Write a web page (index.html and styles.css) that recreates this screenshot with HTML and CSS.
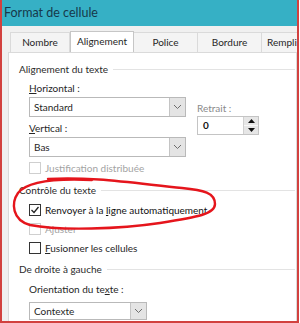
FILE: index.html
```html
<!DOCTYPE html>
<html>
<head>
  <title>Format de cellule</title>
  <link rel="stylesheet" href="styles.css">
</head>
<body>
  <div class="window">
    <div class="titlebar">Format de cellule</div>

    <div class="dialog">
      <div class="tabs">
        <div class="tab first">Nombre</div>
        <div class="tab active">Alignement</div>
        <div class="tab">Police</div>
        <div class="tab">Bordure</div>
        <div class="tab last">Remplissage</div>
      </div>

      <div class="panel">
        <!-- Alignement du texte -->
        <div class="group-title g1">Alignement du texte</div>
        <div class="align-row">
          <div class="col-left">
            <div class="label lbl-horiz"><u>H</u>orizontal :</div>
            <div class="combo wide">
              <span class="combo-text">Standard</span>
              <span class="combo-btn">
                <svg width="9" height="6" viewBox="0 0 9 6"><polyline points="1,1 4.5,4.5 8,1" fill="none" stroke="#6d6d6d" stroke-width="1"/></svg>
              </span>
            </div>
            <div class="label lbl-vert"><u>V</u>ertical :</div>
            <div class="combo wide">
              <span class="combo-text">Bas</span>
              <span class="combo-btn">
                <svg width="9" height="6" viewBox="0 0 9 6"><polyline points="1,1 4.5,4.5 8,1" fill="none" stroke="#6d6d6d" stroke-width="1"/></svg>
              </span>
            </div>
            <div class="check disabled row-justif"><span class="box"></span><span>Justification distribuée</span></div>
          </div>
          <div class="col-right">
            <div class="label muted lbl-retrait">Retrait :</div>
            <div class="spinner">
              <span class="spin-text">0</span>
              <span class="spin-btns">
                <span class="spin-btn"><svg width="7" height="4" viewBox="0 0 7 4"><polygon points="0,4 3.5,0 7,4" fill="#111"/></svg></span>
                <span class="spin-btn"><svg width="7" height="4" viewBox="0 0 7 4"><polygon points="0,0 3.5,4 7,0" fill="#111"/></svg></span>
              </span>
            </div>
          </div>
        </div>

        <!-- Contrôle du texte -->
        <div class="group-title g2">Contrôle du texte</div>
        <div class="indent">
          <div class="check row-wrap"><span class="box checked">
            <svg width="10" height="10" viewBox="0 0 10 10"><polyline points="1.5,5 4,7.5 8.5,2" fill="none" stroke="#222" stroke-width="1.3"/></svg>
          </span><span>Renvoyer à la <u>l</u>igne automatiquement</span></div>
          <div class="check disabled row-fit"><span class="box"></span><span>Ajuster</span></div>
          <div class="check row-merge"><span class="box"></span><span><u>F</u>usionner les cellules</span></div>
        </div>

        <!-- De droite à gauche -->
        <div class="group-title g3">De droite à gauche</div>
        <div class="indent">
          <div class="label lbl-orient">Orientation du te<u>x</u>te :</div>
          <div class="combo narrow">
            <span class="combo-text">Contexte</span>
            <span class="combo-btn">
              <svg width="9" height="6" viewBox="0 0 9 6"><polyline points="1,1 4.5,4.5 8,1" fill="none" stroke="#6d6d6d" stroke-width="1"/></svg>
            </span>
          </div>
        </div>
      </div>
    </div>

    <!-- hand-drawn red mark over the wrap option -->
    <svg class="scribble" width="300" height="323" viewBox="0 0 300 323">
      <path d="M48 179 C90 176 140 184 182 188 C204 190 215 193 215 204 C215 214 198 217 160 223 C120 229 60 231 30 225 C12 220 11 203 18 193 C26 183 50 178 92 180"
            fill="none" stroke="#e5151c" stroke-width="2.4" stroke-linecap="round"/>
    </svg>
  </div>
</body>
</html>
```

FILE: styles.css
```css
body {
  margin: 0;
  background: #ffffff;
  font-family: Lato, "Noto Sans", sans-serif;
  font-size: 10px;
  color: #262626;
}

.window {
  position: relative;
  width: 295px;
  height: 321px;
  border-left: 2px solid #d2413f;
  border-right: 2px solid #d2413f;
  border-bottom: 2px solid #d2413f;
  overflow: hidden;
  background: #f0f0f0;
}

.titlebar {
  height: 26px;
  line-height: 25px;
  padding-left: 2px;
  background: #36b0c5;
  color: #17384a;
  font-size: 12.5px;
}

.dialog {
  padding: 6px 0 0 6px;
}

.tabs {
  display: flex;
  height: 20px;
  padding-left: 2px;
}

.tab {
  flex-shrink: 0;
  width: 64px;
  height: 20px;
  line-height: 19px;
  text-align: center;
  background: #f4f4f4;
  border-top: 1px solid #dadada;
  border-right: 1px solid #dadada;
  box-sizing: border-box;
  white-space: nowrap;
}

.tab.first {
  width: 60px;
  border-left: 1px solid #dadada;
}

.tab.active {
  background: #ffffff;
  border: 1px solid #c6c6c6;
  border-bottom: none;
  margin-top: -1px;
  height: 21px;
  position: relative;
  z-index: 1;
}

.tab.last {
  width: 80px;
  text-align: left;
  padding-left: 5px;
}

.panel {
  background: #ffffff;
  border: 1px solid #dadada;
  height: 300px;
  padding-left: 10px;
}

.group-title {
  display: flex;
  align-items: center;
  height: 16px;
  line-height: 16px;
  color: #2b2b2b;
  margin-right: 1px;
}

.group-title::after {
  content: "";
  flex: 1;
  height: 1px;
  margin-left: 5px;
  background: #e3e3e3;
}

.g1 { margin-top: 8px; }
.g2 { margin-top: 6px; }
.g3 { margin-top: 5px; }

.align-row {
  display: flex;
  padding-left: 10px;
  gap: 11px;
}

.col-left {
  width: 157px;
}

.indent {
  padding-left: 10px;
}

.label {
  height: 16px;
  line-height: 16px;
  white-space: nowrap;
}

.label.muted {
  color: #8a8a8a;
}

.lbl-horiz { margin-top: 3px; }
.lbl-vert { margin-top: 3px; }
.lbl-retrait { margin-top: 23px; }
.lbl-orient { margin-top: 4px; }

.combo {
  display: flex;
  height: 20px;
  margin-top: 1px;
  border: 1px solid #b9b9b9;
  box-sizing: border-box;
  background: #ffffff;
}

.combo.wide { width: 157px; }
.combo.narrow { width: 118px; height: 18px; margin-top: 5px; }

.combo-text {
  flex: 1;
  padding-left: 4px;
  line-height: 18px;
}

.combo.narrow .combo-text { line-height: 16px; }

.combo-btn {
  width: 15px;
  background: #e4e4e4;
  border-left: 1px solid #c4c4c4;
  display: flex;
  align-items: center;
  justify-content: center;
}

.spinner {
  display: flex;
  width: 62px;
  height: 19px;
  border: 1px solid #c4c4c4;
  box-sizing: border-box;
}

.spin-text {
  flex: 1;
  padding-left: 5px;
  line-height: 17px;
  font-weight: bold;
  color: #111;
}

.spin-btns {
  width: 14px;
  display: flex;
  flex-direction: column;
  border-left: 1px solid #d0d0d0;
}

.spin-btn {
  flex: 1;
  background: #e6e6e6;
  display: flex;
  align-items: center;
  justify-content: center;
}

.spin-btn + .spin-btn {
  border-top: 1px solid #f8f8f8;
}

.check {
  display: flex;
  align-items: center;
  height: 16px;
  line-height: 16px;
  white-space: nowrap;
}

.check.disabled {
  color: #a3a3a3;
}

.box {
  width: 12px;
  height: 12px;
  box-sizing: border-box;
  border: 1px solid #333333;
  background: #ffffff;
  margin-right: 4px;
  display: flex;
  align-items: center;
  justify-content: center;
}

.check.disabled .box {
  border-color: #cfcfcf;
}

.row-justif { margin-top: 3px; }
.row-wrap { margin-top: 4px; color: #111; }
.row-fit { margin-top: 3px; }
.row-merge { margin-top: 3px; }

.scribble {
  position: absolute;
  left: -2px;
  top: 0;
  pointer-events: none;
}
```
